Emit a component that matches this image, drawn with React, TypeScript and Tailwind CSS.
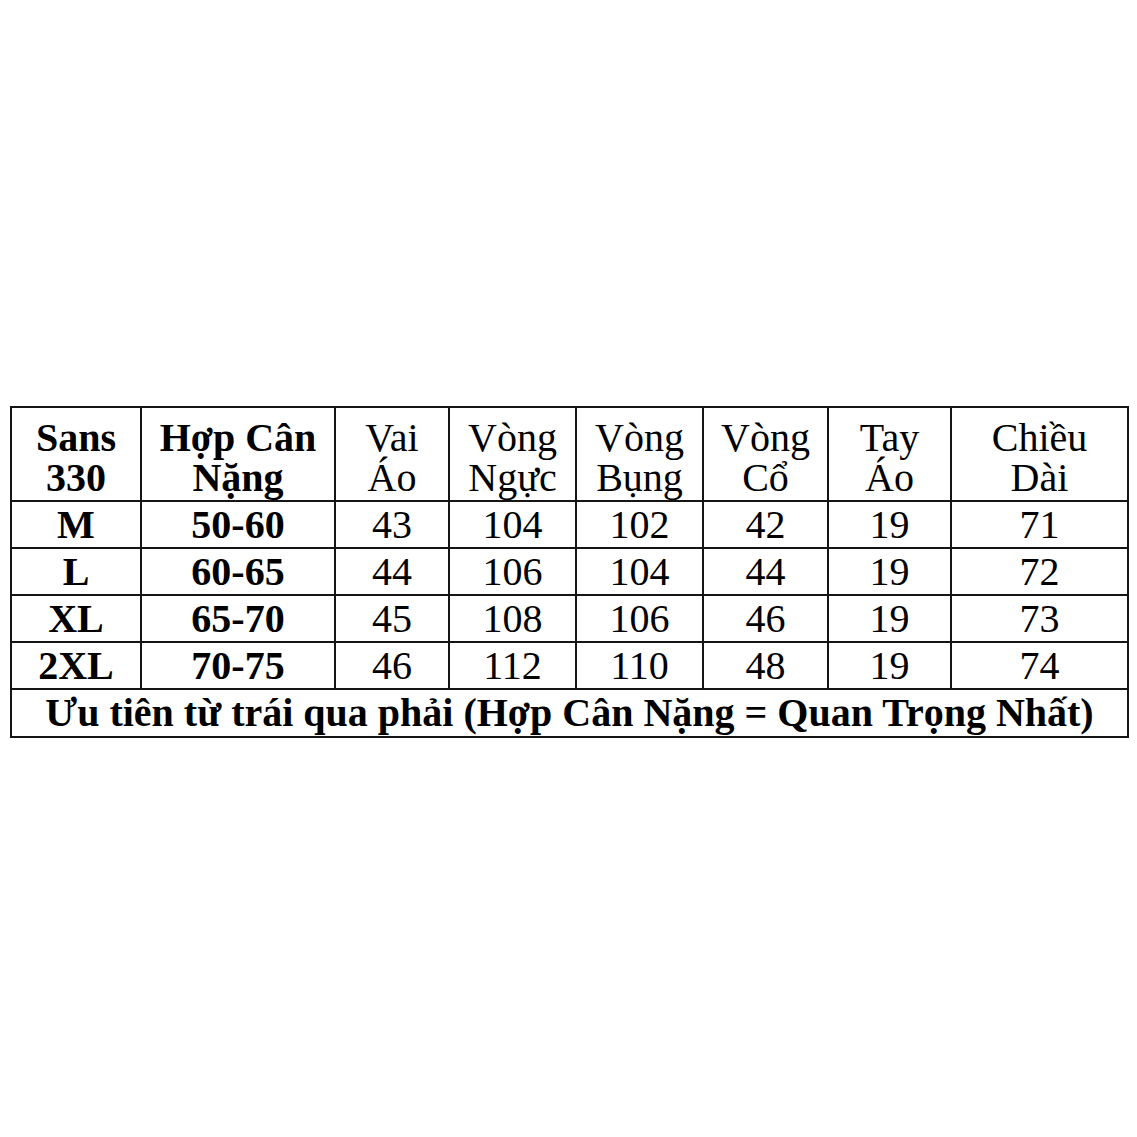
import React from "react";

const cols = "grid-cols-[130px_194px_114px_127px_127px_125px_123px_177px]";

const header: [string, string, boolean][] = [
  ["Sans", "330", true],
  ["Hợp Cân", "Nặng", true],
  ["Vai", "Áo", false],
  ["Vòng", "Ngực", false],
  ["Vòng", "Bụng", false],
  ["Vòng", "Cổ", false],
  ["Tay", "Áo", false],
  ["Chiều", "Dài", false],
];

const rows: string[][] = [
  ["M", "50-60", "43", "104", "102", "42", "19", "71"],
  ["L", "60-65", "44", "106", "104", "44", "19", "72"],
  ["XL", "65-70", "45", "108", "106", "46", "19", "73"],
  ["2XL", "70-75", "46", "112", "110", "48", "19", "74"],
];

export default function App() {
  return (
    <div
      className="min-h-[1137px] w-full bg-white pt-[406px] pl-[10px] text-black"
      style={{ fontFamily: '"Liberation Serif", "Times New Roman", serif' }}
    >
      <div className={`grid w-[1119px] ${cols} border-l-2 border-t-2 border-[#151515] text-[40px]`}>
        {header.map(([a, b, bold], i) => (
          <div
            key={"h" + i}
            className={`flex h-[94px] flex-col items-center justify-end border-b-2 border-r-2 border-[#151515] pb-[2px] leading-[40px] ${
              bold ? "font-bold" : "font-normal"
            }`}
          >
            <span className="whitespace-nowrap">{a}</span>
            <span className="whitespace-nowrap">{b}</span>
          </div>
        ))}
        {rows.map((r, ri) =>
          r.map((c, ci) => (
            <div
              key={ri + "-" + ci}
              className={`flex h-[47px] items-center justify-center border-b-2 border-r-2 border-[#151515] leading-[45px] ${
                ci < 2 ? "font-bold" : "font-normal"
              }`}
            >
              {c}
            </div>
          ))
        )}
        <div className="col-span-8 flex h-[48px] items-center justify-center border-b-2 border-r-2 border-[#151515] font-bold leading-[46px] whitespace-nowrap">
          Ưu tiên từ trái qua phải (Hợp Cân Nặng = Quan Trọng Nhất)
        </div>
      </div>
    </div>
  );
}
